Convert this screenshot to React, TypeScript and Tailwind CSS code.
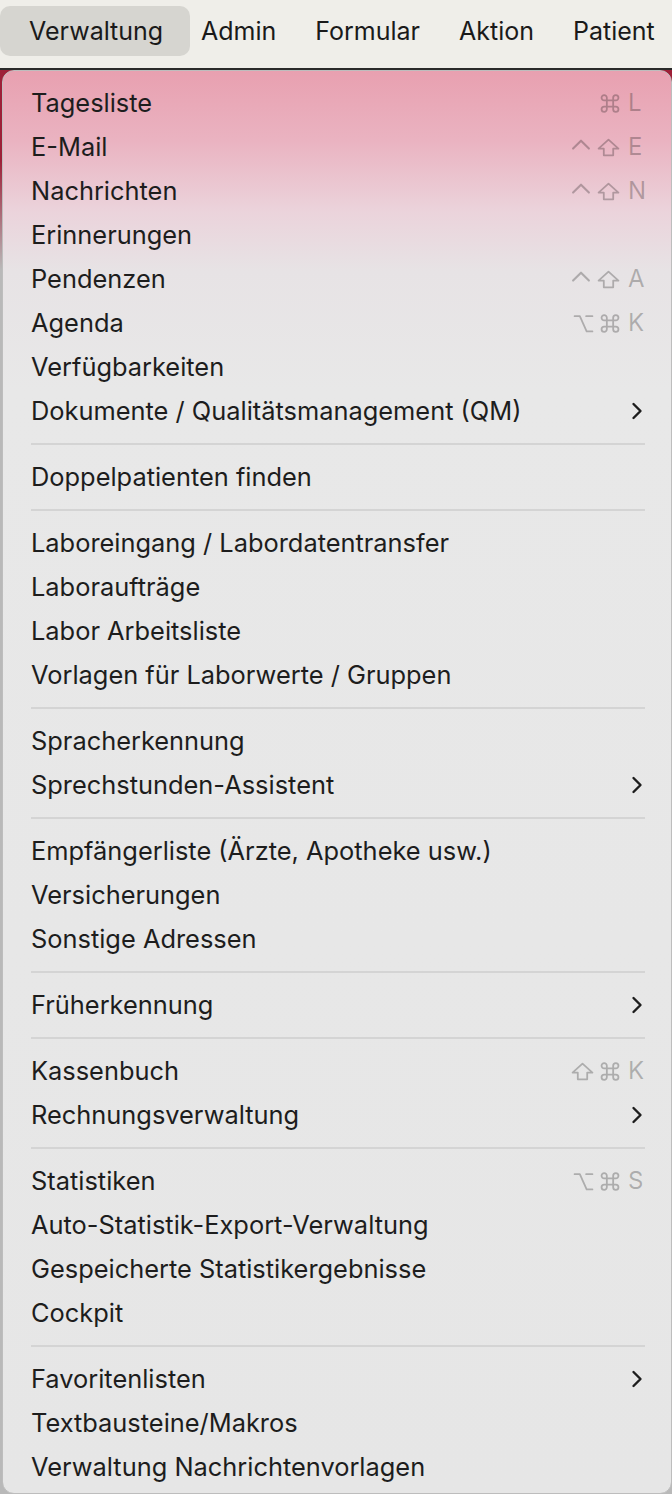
import React from 'react';

type Mod = 'cmd' | 'ctrl' | 'shift' | 'opt';

type Item =
  | { type: 'sep' }
  | { type: 'item'; label: string; mods?: Mod[]; keyChar?: string; sub?: boolean };

const items: Item[] = [
  { type: 'item', label: 'Tagesliste', mods: ['cmd'], keyChar: 'L' },
  { type: 'item', label: 'E-Mail', mods: ['ctrl', 'shift'], keyChar: 'E' },
  { type: 'item', label: 'Nachrichten', mods: ['ctrl', 'shift'], keyChar: 'N' },
  { type: 'item', label: 'Erinnerungen' },
  { type: 'item', label: 'Pendenzen', mods: ['ctrl', 'shift'], keyChar: 'A' },
  { type: 'item', label: 'Agenda', mods: ['opt', 'cmd'], keyChar: 'K' },
  { type: 'item', label: 'Verfügbarkeiten' },
  { type: 'item', label: 'Dokumente / Qualitätsmanagement (QM)', sub: true },
  { type: 'sep' },
  { type: 'item', label: 'Doppelpatienten finden' },
  { type: 'sep' },
  { type: 'item', label: 'Laboreingang / Labordatentransfer' },
  { type: 'item', label: 'Laboraufträge' },
  { type: 'item', label: 'Labor Arbeitsliste' },
  { type: 'item', label: 'Vorlagen für Laborwerte / Gruppen' },
  { type: 'sep' },
  { type: 'item', label: 'Spracherkennung' },
  { type: 'item', label: 'Sprechstunden-Assistent', sub: true },
  { type: 'sep' },
  { type: 'item', label: 'Empfängerliste (Ärzte, Apotheke usw.)' },
  { type: 'item', label: 'Versicherungen' },
  { type: 'item', label: 'Sonstige Adressen' },
  { type: 'sep' },
  { type: 'item', label: 'Früherkennung', sub: true },
  { type: 'sep' },
  { type: 'item', label: 'Kassenbuch', mods: ['shift', 'cmd'], keyChar: 'K' },
  { type: 'item', label: 'Rechnungsverwaltung', sub: true },
  { type: 'sep' },
  { type: 'item', label: 'Statistiken', mods: ['opt', 'cmd'], keyChar: 'S' },
  { type: 'item', label: 'Auto-Statistik-Export-Verwaltung' },
  { type: 'item', label: 'Gespeicherte Statistikergebnisse' },
  { type: 'item', label: 'Cockpit' },
  { type: 'sep' },
  { type: 'item', label: 'Favoritenlisten', sub: true },
  { type: 'item', label: 'Textbausteine/Makros' },
  { type: 'item', label: 'Verwaltung Nachrichtenvorlagen' },
];

const menus = ['Admin', 'Formular', 'Aktion', 'Patient'];

const Chevron = () => (
  <svg width="12" height="20" viewBox="0 0 12 20" fill="none">
    <path d="M2.5 3 L9.5 10 L2.5 17" stroke="#1d1d1d" strokeWidth="2.4" strokeLinecap="round" strokeLinejoin="round" />
  </svg>
);

// modifier key glyphs
const ModIcon = ({ kind }: { kind: Mod }) => {
  const common = {
    fill: 'none',
    stroke: 'currentColor',
    strokeWidth: 1.7,
    strokeLinecap: 'round' as const,
    strokeLinejoin: 'round' as const,
  };
  if (kind === 'cmd')
    return (
      <svg width="20" height="19" viewBox="1 1 18 18">
        <path
          {...common}
          d="M7 7 L7 4.5 A2.5 2.5 0 1 0 4.5 7 L15.5 7 A2.5 2.5 0 1 0 13 4.5 L13 15.5 A2.5 2.5 0 1 0 15.5 13 L4.5 13 A2.5 2.5 0 1 0 7 15.5 Z"
        />
      </svg>
    );
  if (kind === 'shift')
    return (
      <svg width="23" height="19" viewBox="0 0 22 18">
        <path {...common} d="M11 1.5 L20.5 10 H15.5 V16.5 H6.5 V10 H1.5 Z" />
      </svg>
    );
  if (kind === 'ctrl')
    return (
      <svg width="20" height="19" viewBox="0 0 19 18">
        <path {...common} strokeWidth={2} d="M2 10 L9.5 2.5 L17 10" />
      </svg>
    );
  return (
    <svg width="21" height="19" viewBox="0 0 20 18">
      <path {...common} d="M1.5 2 H6.5 L13 16.5 H18.5 M12.5 2 H18.5" />
    </svg>
  );
};

const App = () => {
  return (
    <div className="w-[672px] h-[1494px] overflow-hidden bg-[#e6e6e6] font-['Inter','Helvetica_Neue',sans-serif]">
      {/* Menu bar */}
      <div className="h-[70px] bg-[#efeee9] border-b-2 border-[#2a2a2a] flex items-start pt-[6px] text-[25px] text-[#1a1a1a]">
        <div className="w-[190px] h-[50px] flex items-center pl-[29px] pt-[2px] rounded-[10px] bg-[#d6d5d0]">Verwaltung</div>
        <div className="h-[50px] flex items-center pt-[2px] gap-[39px] ml-[11px]">
          {menus.map((m) => (
            <span key={m}>{m}</span>
          ))}
        </div>
      </div>

      {/* Dropdown */}
      <div className="bg-[linear-gradient(180deg,#9d2038_0px,#9d2038_90px,#b9b9b9_200px,#b9b9b9_100%)] pl-[2px] h-[1424px]">
        <div className="h-full rounded-[12px] border border-[#bdbdbd] bg-[linear-gradient(180deg,#e8a0b0_0px,#eab3c1_70px,#ebd3db_140px,#e7e3e5_200px,#e8e8e8_320px,#e6e6e6_100%)] pt-[10px] pl-[28px] pr-[26px] text-[#1d1d1d]">
          {items.map((it, idx) =>
            it.type === 'sep' ? (
              <div key={idx} className="h-[22px] flex items-center">
                <div className="w-full h-[2px] bg-[#d2d2d2]/90" />
              </div>
            ) : (
              <div key={idx} className="h-[44px] flex items-center justify-between">
                <span className="text-[25.4px] leading-none">{it.label}</span>
                {it.sub ? (
                  <span className="pr-[2px] flex items-center">
                    <Chevron />
                  </span>
                ) : it.keyChar ? (
                  <span className="flex items-center text-black/25">
                    <span className="flex items-start gap-[6px] h-[19px]">
                      {it.mods?.map((m, j) => (
                        <ModIcon key={j} kind={m} />
                      ))}
                    </span>
                    <span className="w-[17px] ml-[8px] text-[24px] leading-none">{it.keyChar}</span>
                  </span>
                ) : null}
              </div>
            )
          )}
        </div>
      </div>
    </div>
  );
};

export default App;
